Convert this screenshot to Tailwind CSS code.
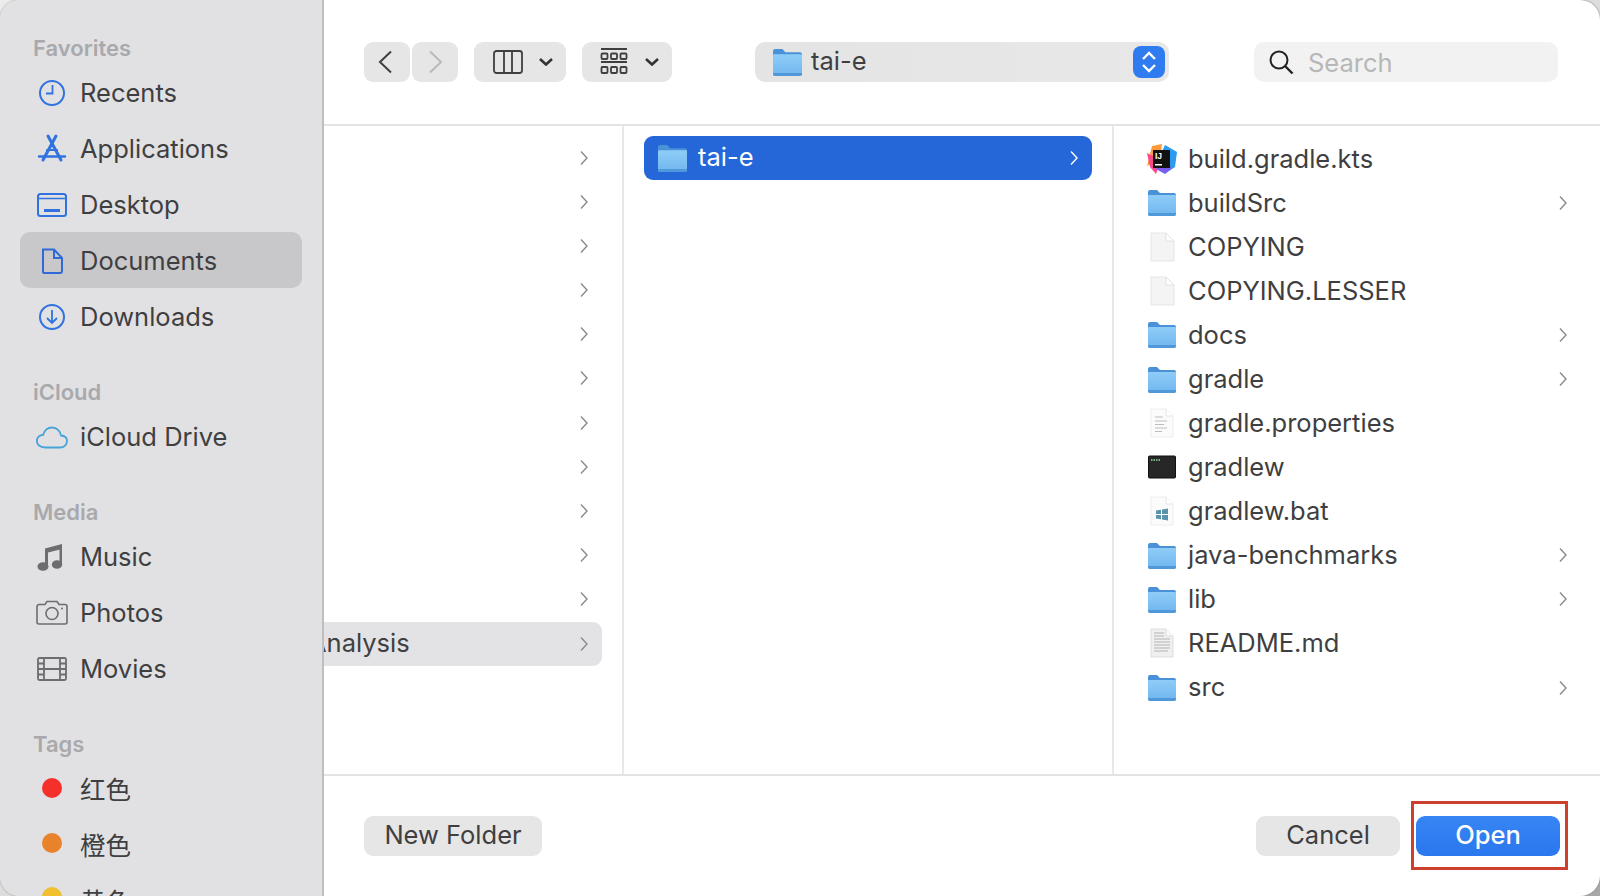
<!DOCTYPE html>
<html lang="en">
<head>
<meta charset="utf-8">
<script src="https://cdn.jsdelivr.net/npm/@tailwindcss/browser@4"></script>
<title>Open</title>
</head>
<body class="m-0">
<svg width="0" height="0" class="absolute">
  <defs>
    <linearGradient id="fb" x1="0" y1="0" x2="0" y2="1"><stop offset="0" stop-color="#8fcdf8"/><stop offset="1" stop-color="#6fb5ee"/></linearGradient>
    <symbol id="folder" viewBox="0 0 28 27">
      <path d="M0 3a2 2 0 0 1 2-2h7l3 3h14a2 2 0 0 1 2 2v6H0z" fill="#4a92d8"/>
      <path d="M0 7a1 1 0 0 1 1-1h26a1 1 0 0 1 1 1v18a2 2 0 0 1-2 2H2a2 2 0 0 1-2-2z" fill="url(#fb)"/>
      <path d="M0 24h28v1a2 2 0 0 1-2 2H2a2 2 0 0 1-2-2z" fill="#4f98da"/>
    </symbol>
    <symbol id="doc" viewBox="0 0 28 30">
      <path d="M3 1h15l8 8v20H3z" fill="#f4f4f4" stroke="#e6e6e6" stroke-width="1"/>
      <path d="M18 1v8h8z" fill="#fff" stroke="#e2e2e2" stroke-width="1"/>
    </symbol>
    <symbol id="chev" viewBox="0 0 10 16">
      <path d="M2 1.5 8 8l-6 6.5" fill="none" stroke="currentColor" stroke-width="1.4"/>
    </symbol>
  </defs>
</svg>
<div class="h-[896px] w-[1600px] overflow-hidden bg-linear-to-br from-[#ececec] via-[#dddddd] to-[#a8a8a8] font-['Inter','Noto_Sans_CJK_SC',sans-serif] text-[#3f3f41]">
  <div class="relative flex h-full w-full overflow-hidden rounded-[20px] bg-white shadow-[0_0_2px_#777]">

    <aside class="w-[324px] shrink-0 border-r-2 border-[#bfbfc1] bg-[#e1e1e4] pt-[30px]">
      <div class="flex h-[34px] items-center pl-[33px] pt-[3px] text-[22px] font-semibold text-[#a9a9ac]">Favorites</div>
      <div class="mx-[20px] flex h-[56px] items-center rounded-[10px] pl-[16px] pt-[2px] text-[25.5px]">
        <svg class="mr-[12px] h-[32px] w-[32px] shrink-0" viewBox="0 0 32 32" fill="none" stroke="#2f72e0" stroke-width="2"><circle cx="16" cy="16" r="12"/><path d="M16.5 8v8.5H10" stroke-width="1.8"/></svg>
        Recents
      </div>
      <div class="mx-[20px] flex h-[56px] items-center rounded-[10px] pl-[16px] pt-[2px] text-[25.5px]">
        <svg class="mr-[12px] h-[32px] w-[32px] shrink-0" viewBox="0 0 32 32" fill="none" stroke="#2f72e0" stroke-width="3" stroke-linecap="round"><path d="M12 3l13 24"/><path d="M20 3 7 27"/><path d="M3 23.500h26" stroke-width="2.400"/><path d="M11 17h10" stroke-width="2"/></svg>
        Applications
      </div>
      <div class="mx-[20px] flex h-[56px] items-center rounded-[10px] pl-[16px] pt-[2px] text-[25.5px]">
        <svg class="mr-[12px] h-[32px] w-[32px] shrink-0" viewBox="0 0 32 32" fill="none" stroke="#2f72e0" stroke-width="2"><rect x="2" y="5" width="28" height="22" rx="2.500"/><path d="M2 9.500h28" stroke-width="1.600"/><path d="M8 21.500h16" stroke-width="3"/></svg>
        Desktop
      </div>
      <div class="mx-[20px] flex h-[56px] items-center rounded-[10px] bg-[#c8c8ca] pl-[16px] pt-[2px] text-[25.5px]">
        <svg class="mr-[12px] h-[32px] w-[32px] shrink-0" viewBox="0 0 32 32" fill="none" stroke="#2f6ad6" stroke-width="2"><path d="M7 4.500h11l8 8.500v13a2 2 0 0 1-2 2H8a1.500 1.500 0 0 1-1-1.500z"/><path d="M18 4.500V13h8"/></svg>
        Documents
      </div>
      <div class="mx-[20px] flex h-[56px] items-center rounded-[10px] pl-[16px] pt-[2px] text-[25.5px]">
        <svg class="mr-[12px] h-[32px] w-[32px] shrink-0" viewBox="0 0 32 32" fill="none" stroke="#2f72e0" stroke-width="2"><circle cx="16" cy="16" r="12"/><path d="M16 9v13M11 17l5 5 5-5" stroke-width="1.800"/></svg>
        Downloads
      </div>

      <div class="mt-[30px] flex h-[34px] items-center pl-[33px] pt-[3px] text-[22px] font-semibold text-[#a9a9ac]">iCloud</div>
      <div class="mx-[20px] flex h-[56px] items-center rounded-[10px] pl-[16px] pt-[2px] text-[25.5px]">
        <svg class="mr-[12px] h-[32px] w-[32px] shrink-0" viewBox="0 0 32 32" fill="none" stroke="#47a3d8" stroke-width="1.800"><path d="M9 26.500C4 26.500 .8 23.500.8 20c0-3.500 2.800-6 6.200-6 1.200-4.500 4.800-7.500 9-7.500 4.800 0 8.400 3.500 9 8 3.600.3 6 2.500 6 5.500 0 3.500-2.800 6.500-6.800 6.500z"/></svg>
        iCloud Drive
      </div>

      <div class="mt-[30px] flex h-[34px] items-center pl-[33px] pt-[3px] text-[22px] font-semibold text-[#a9a9ac]">Media</div>
      <div class="mx-[20px] flex h-[56px] items-center rounded-[10px] pl-[16px] pt-[2px] text-[25.5px]">
        <svg class="mr-[12px] h-[32px] w-[32px] shrink-0" viewBox="0 0 32 32" fill="#6d6d70"><path d="M9 7.500 26 3v5L12 11.500V25H9zM23.500 6H26v18h-2.500z"/><ellipse cx="7" cy="25.500" rx="5.500" ry="4.300"/><ellipse cx="21" cy="23.500" rx="5.200" ry="4.300"/></svg>
        Music
      </div>
      <div class="mx-[20px] flex h-[56px] items-center rounded-[10px] pl-[16px] pt-[2px] text-[25.5px]">
        <svg class="mr-[12px] h-[32px] w-[32px] shrink-0" viewBox="0 0 32 32" fill="none" stroke="#6d6d70" stroke-width="1.600"><path d="M3 7.500h6l2-3h10l2 3h6a2 2 0 0 1 2 2V25a2 2 0 0 1-2 2H3a2 2 0 0 1-2-2V9.500a2 2 0 0 1 2-2z"/><circle cx="16" cy="16.500" r="6"/><circle cx="26" cy="11.500" r="1" fill="#6d6d70" stroke="none"/></svg>
        Photos
      </div>
      <div class="mx-[20px] flex h-[56px] items-center rounded-[10px] pl-[16px] pt-[2px] text-[25.5px]">
        <svg class="mr-[12px] h-[32px] w-[32px] shrink-0" viewBox="0 0 32 32" fill="none" stroke="#6d6d70" stroke-width="1.800"><rect x="2" y="5" width="28" height="22" rx="1.500"/><path d="M8 5v22M24 5v22M8 16h16M2 10.500h6M2 16h6M2 21.500h6M24 10.500h6M24 16h6M24 21.500h6"/></svg>
        Movies
      </div>

      <div class="mt-[30px] flex h-[34px] items-center pl-[33px] pt-[3px] text-[22px] font-semibold text-[#a9a9ac]">Tags</div>
      <div class="mx-[20px] flex h-[56px] items-center rounded-[10px] pl-[22px] pt-[4px] text-[25.5px]">
        <span class="mr-[18px] h-[20px] w-[20px] shrink-0 -translate-y-[2px] rounded-full bg-[#f5302a]"></span>红色
      </div>
      <div class="mx-[20px] flex h-[56px] items-center rounded-[10px] pl-[22px] pt-[4px] text-[25.5px]">
        <span class="mr-[18px] h-[20px] w-[20px] shrink-0 -translate-y-[3px] rounded-full bg-[#e8832c]"></span>橙色
      </div>
      <div class="mx-[20px] flex h-[56px] items-center rounded-[10px] pl-[22px] pt-[4px] text-[25.5px]">
        <span class="mr-[18px] h-[20px] w-[20px] shrink-0 -translate-y-[5px] rounded-full bg-[#f0c030]"></span>黄色
      </div>
    </aside>

    <main class="relative flex min-w-0 flex-1 flex-col">
      <div class="flex h-[126px] shrink-0 items-start border-b-2 border-[#e3e3e3] pl-[40px] pt-[42px]">
        <div class="flex h-[40px] w-[46px] items-center justify-center rounded-[9px] bg-[#e6e6e6] pr-[4px]">
          <svg class="h-[24px] w-[16px] text-[#3f3f41]" viewBox="0 0 16 24" fill="none" stroke="currentColor" stroke-width="2"><path d="M14 1.500 3 12l11 10.500"/></svg>
        </div>
        <div class="ml-[2px] flex h-[40px] w-[46px] items-center justify-center rounded-[9px] bg-[#e6e6e6] pl-[2px]">
          <svg class="h-[24px] w-[16px] text-[#b9b9b9]" viewBox="0 0 16 24" fill="none" stroke="currentColor" stroke-width="2"><path d="M2 1.500 13 12 2 22.500"/></svg>
        </div>
        <div class="ml-[16px] flex h-[40px] w-[92px] items-center rounded-[9px] bg-[#e6e6e6] pl-[19px]">
          <svg class="h-[24px] w-[30px]" viewBox="0 0 30 24" fill="none" stroke="#3f3f41" stroke-width="1.800"><rect x="1" y="1" width="28" height="22" rx="2.500"/><path d="M11 1v22M19 1v22"/></svg>
          <svg class="ml-[16px] h-[8px] w-[14px]" viewBox="0 0 14 8" fill="none" stroke="#333" stroke-width="2.600"><path d="M1 1l6 5.500L13 1"/></svg>
        </div>
        <div class="ml-[16px] flex h-[40px] w-[90px] items-center rounded-[9px] bg-[#e6e6e6] pl-[18px]">
          <svg class="h-[28px] w-[28px]" viewBox="0 0 28 28" fill="none" stroke="#3f3f41" stroke-width="1.800"><path d="M1 1h26M1 14h26"/><rect x="1.500" y="5.500" width="6" height="5.500" rx="1"/><rect x="11" y="5.500" width="6" height="5.500" rx="1"/><rect x="20.500" y="5.500" width="6" height="5.500" rx="1"/><rect x="1.500" y="19" width="6" height="6" rx="1"/><rect x="11" y="19" width="6" height="6" rx="1"/><rect x="20.500" y="19" width="6" height="6" rx="1"/></svg>
          <svg class="ml-[17px] h-[8px] w-[14px]" viewBox="0 0 14 8" fill="none" stroke="#333" stroke-width="2.600"><path d="M1 1l6 5.500L13 1"/></svg>
        </div>
        <div class="ml-[83px] flex h-[40px] w-[414px] items-center rounded-[10px] bg-linear-to-r from-[#e4e4e4] to-[#e8e8e8] pl-[18px] text-[25.5px]">
          <svg class="h-[28px] w-[29px] shrink-0"><use href="#folder"/></svg>
          <span class="ml-[9px] -translate-y-[1px]">tai-e</span>
          <div class="mr-[4px] ml-auto flex h-[32px] w-[32px] items-center justify-center rounded-[8px] bg-[#2f7bf0]">
            <svg class="h-[26px] w-[16px]" viewBox="0 0 16 26" fill="none" stroke="#fff" stroke-width="2.400"><path d="M2 10l6-6 6 6M2 16l6 6 6-6"/></svg>
          </div>
        </div>
        <div class="ml-[85px] flex h-[40px] w-[304px] items-center rounded-[10px] bg-[#f2f2f2] pl-[14px] text-[25.5px] text-[#b7b7b7]">
          <svg class="mr-[14px] h-[26px] w-[26px] shrink-0" viewBox="0 0 26 26" fill="none" stroke="#222" stroke-width="2"><circle cx="11" cy="11" r="8.500"/><path d="M17 17l7.500 7.500" stroke-width="2.400"/></svg>
          <span class="translate-y-[1px]">Search</span>
        </div>
      </div>

      <div class="flex min-h-0 flex-1">
        <div class="w-[300px] shrink-0 border-r-2 border-[#e8e8e8] pt-[10px]">
          <div class="flex h-[44.08px] items-center justify-end pr-[33px] text-[#8a8a8a]"><svg class="h-[16px] w-[10px]"><use href="#chev"/></svg></div>
          <div class="flex h-[44.08px] items-center justify-end pr-[33px] text-[#8a8a8a]"><svg class="h-[16px] w-[10px]"><use href="#chev"/></svg></div>
          <div class="flex h-[44.08px] items-center justify-end pr-[33px] text-[#8a8a8a]"><svg class="h-[16px] w-[10px]"><use href="#chev"/></svg></div>
          <div class="flex h-[44.08px] items-center justify-end pr-[33px] text-[#8a8a8a]"><svg class="h-[16px] w-[10px]"><use href="#chev"/></svg></div>
          <div class="flex h-[44.08px] items-center justify-end pr-[33px] text-[#8a8a8a]"><svg class="h-[16px] w-[10px]"><use href="#chev"/></svg></div>
          <div class="flex h-[44.08px] items-center justify-end pr-[33px] text-[#8a8a8a]"><svg class="h-[16px] w-[10px]"><use href="#chev"/></svg></div>
          <div class="flex h-[44.08px] items-center justify-end pr-[33px] text-[#8a8a8a]"><svg class="h-[16px] w-[10px]"><use href="#chev"/></svg></div>
          <div class="flex h-[44.08px] items-center justify-end pr-[33px] text-[#8a8a8a]"><svg class="h-[16px] w-[10px]"><use href="#chev"/></svg></div>
          <div class="flex h-[44.08px] items-center justify-end pr-[33px] text-[#8a8a8a]"><svg class="h-[16px] w-[10px]"><use href="#chev"/></svg></div>
          <div class="flex h-[44.08px] items-center justify-end pr-[33px] text-[#8a8a8a]"><svg class="h-[16px] w-[10px]"><use href="#chev"/></svg></div>
          <div class="flex h-[44.08px] items-center justify-end pr-[33px] text-[#8a8a8a]"><svg class="h-[16px] w-[10px]"><use href="#chev"/></svg></div>
          <div class="mt-[1px] flex h-[44px] w-[278px] items-center overflow-hidden rounded-r-[9px] bg-[#e3e3e5] pr-[13px] text-[25.5px] text-[#8a8a8a]">
            <span class="-ml-[15px] -translate-y-[1px] text-[#3f3f41]">Analysis</span>
            <svg class="ml-auto h-[16px] w-[10px]"><use href="#chev"/></svg>
          </div>
        </div>

        <div class="w-[490px] shrink-0 border-r-2 border-[#e8e8e8] px-[20px] pt-[10px]">
          <div class="flex h-[44px] items-center rounded-[9px] bg-[#2566d8] pl-[14px] pr-[13px] text-[25.5px] text-white">
            <svg class="h-[28px] w-[29px] shrink-0"><use href="#folder"/></svg>
            <span class="ml-[11px] -translate-y-[1px]">tai-e</span>
            <svg class="ml-auto h-[16px] w-[10px]"><use href="#chev"/></svg>
          </div>
        </div>

        <div class="flex-1 pt-[10.6px] pl-[33px] pr-[32px] text-[25.5px]">
          <div class="flex h-[44.08px] items-center">
            <svg class="mr-[11px] h-[30px] w-[30px] shrink-0" viewBox="0 0 30 30">
              <path d="M5 2 15 0l-2 14L0 22z" fill="#fc9a3c"/><path d="M0 9 14 16 9 30 3 23z" fill="#fb4a8c"/><path d="M18 1l12 7-2 15-9 6-8-13z" fill="#2b9cf2"/><path d="M14 14l11 10-7 6-9-5z" fill="#7a5cf0"/>
              <rect x="6" y="6" width="17" height="18" fill="#111"/>
              <text x="8" y="15" font-size="8.500" font-weight="700" fill="#fff" font-family="Liberation Sans">IJ</text>
              <rect x="8" y="20" width="7" height="1.500" fill="#fff"/>
            </svg>
            build.gradle.kts
          </div>
          <div class="flex h-[44.08px] items-center">
            <svg class="mr-[11px] h-[27px] w-[30px] shrink-0"><use href="#folder"/></svg>buildSrc
            <svg class="ml-auto h-[16px] w-[10px] text-[#8a8a8a]"><use href="#chev"/></svg>
          </div>
          <div class="flex h-[44.08px] items-center">
            <svg class="mr-[11px] h-[30px] w-[30px] shrink-0"><use href="#doc"/></svg>COPYING
          </div>
          <div class="flex h-[44.08px] items-center">
            <svg class="mr-[11px] h-[30px] w-[30px] shrink-0"><use href="#doc"/></svg>COPYING.LESSER
          </div>
          <div class="flex h-[44.08px] items-center">
            <svg class="mr-[11px] h-[27px] w-[30px] shrink-0"><use href="#folder"/></svg>docs
            <svg class="ml-auto h-[16px] w-[10px] text-[#8a8a8a]"><use href="#chev"/></svg>
          </div>
          <div class="flex h-[44.08px] items-center">
            <svg class="mr-[11px] h-[27px] w-[30px] shrink-0"><use href="#folder"/></svg>gradle
            <svg class="ml-auto h-[16px] w-[10px] text-[#8a8a8a]"><use href="#chev"/></svg>
          </div>
          <div class="flex h-[44.08px] items-center">
            <svg class="mr-[11px] h-[30px] w-[30px] shrink-0" viewBox="0 0 30 30">
              <path d="M4 1h15l7 7v21H4z" fill="#fbfbfb" stroke="#eeeeee"/><path d="M19 1v7h7" fill="#fff" stroke="#e4e4e4"/>
              <path d="M8 9h8M8 13h12M8 16.500h9M8 20h12M8 23.500h7" stroke="#bdbdbd" stroke-width="1.200"/>
            </svg>
            gradle.properties
          </div>
          <div class="flex h-[44.08px] items-center">
            <svg class="mr-[11px] h-[30px] w-[30px] shrink-0" viewBox="0 0 30 30">
              <rect x="1.500" y="4" width="27" height="22" rx="1" fill="#272727" stroke="#111"/>
              <path d="M4 8h9" stroke="#8fe09b" stroke-width="1.500" stroke-dasharray="1.500 1"/>
            </svg>
            gradlew
          </div>
          <div class="flex h-[44.08px] items-center">
            <svg class="mr-[11px] h-[30px] w-[30px] shrink-0" viewBox="0 0 30 30">
              <path d="M4 1h15l7 7v21H4z" fill="#fbfbfb" stroke="#eeeeee"/><path d="M19 1v7h7" fill="#fff" stroke="#e4e4e4"/>
              <path d="M9 14.500l5-.8v4.300H9zM15 13.500l6-1v5.500h-6zM9 19h5v4.300l-5-.8zM15 19h6v5.500l-6-1z" fill="#5b93ad"/>
            </svg>
            gradlew.bat
          </div>
          <div class="flex h-[44.08px] items-center">
            <svg class="mr-[11px] h-[27px] w-[30px] shrink-0"><use href="#folder"/></svg>java-benchmarks
            <svg class="ml-auto h-[16px] w-[10px] text-[#8a8a8a]"><use href="#chev"/></svg>
          </div>
          <div class="flex h-[44.08px] items-center">
            <svg class="mr-[11px] h-[27px] w-[30px] shrink-0"><use href="#folder"/></svg>lib
            <svg class="ml-auto h-[16px] w-[10px] text-[#8a8a8a]"><use href="#chev"/></svg>
          </div>
          <div class="flex h-[44.08px] items-center">
            <svg class="mr-[11px] h-[30px] w-[30px] shrink-0" viewBox="0 0 30 30">
              <path d="M4 1h15l7 7v21H4z" fill="#f0f0f0" stroke="#dddddd"/><path d="M19 1v7h7" fill="#fafafa" stroke="#dddddd"/>
              <path d="M7 5h10M7 8h10M7 11h16M7 14h16M7 17h16M7 20h16M7 23h14" stroke="#c6c6c6" stroke-width="1.500"/>
            </svg>
            README.md
          </div>
          <div class="flex h-[44.08px] items-center">
            <svg class="mr-[11px] h-[27px] w-[30px] shrink-0"><use href="#folder"/></svg>src
            <svg class="ml-auto h-[16px] w-[10px] text-[#8a8a8a]"><use href="#chev"/></svg>
          </div>
        </div>
      </div>

      <div class="flex h-[122px] shrink-0 items-start border-t-2 border-[#e3e3e3] pl-[40px] pr-[40px] pt-[40px] text-[25.5px]">
        <div class="flex h-[40px] w-[178px] items-center justify-center rounded-[9px] bg-[#e6e6e6] pb-[1px]">New Folder</div>
        <div class="ml-auto flex h-[40px] w-[144px] items-center justify-center rounded-[9px] bg-[#e6e6e6] pb-[1px]">Cancel</div>
        <div class="ml-[16px] flex h-[40px] w-[144px] items-center justify-center rounded-[9px] bg-linear-to-b from-[#3685f4] to-[#2b77ee] pb-[1px] font-medium text-white">Open</div>
      </div>

      <div class="absolute left-[1087px] top-[801px] h-[69px] w-[157px] border-[3px] border-[#cf3f2e]"></div>
    </main>
  </div>
</div>
</body>
</html>
